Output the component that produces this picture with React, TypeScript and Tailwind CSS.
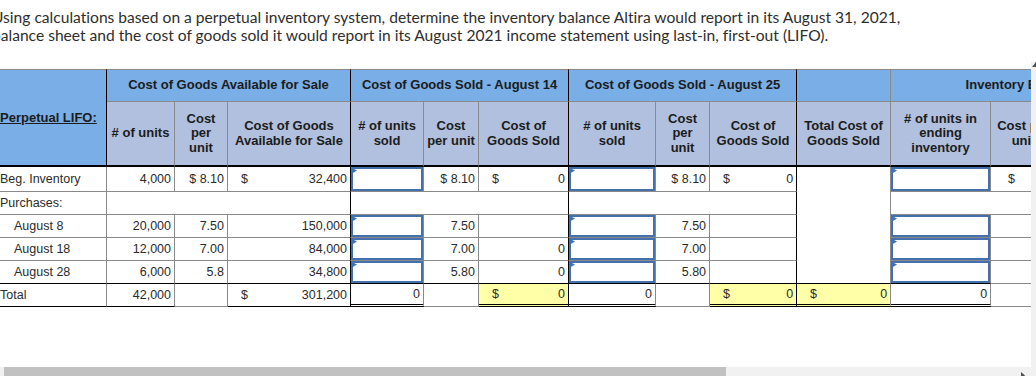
import React from "react";

// border presets (full class names so tailwind picks them up)
const gR = "border-r border-r-[#8a8a8a]";
const bR = "border-r border-r-black";
const gB = "border-b border-b-[#8a8a8a]";
const bB = "border-b border-b-black";
const dB = "border-b-[3px] border-b-black border-double";

const num = "justify-end pr-[3px]";
const dol = "justify-between pl-[13px] pr-[3px]";

function Flag() {
  return (
    <svg className="absolute -left-[1px] -top-[1px]" width="6" height="7" viewBox="0 0 6 7">
      <polygon points="0,0 5,2.5 0,5.5" fill="#3a72c2" />
    </svg>
  );
}

type TdProps = {
  c?: string;
  h?: string;
  inner?: string;
  colSpan?: number;
  rowSpan?: number;
  children?: React.ReactNode;
};

function Td({ c = "", h = "h-[22px]", inner = "", colSpan, rowSpan, children }: TdProps) {
  return (
    <td colSpan={colSpan} rowSpan={rowSpan} className={"p-0 align-middle " + c}>
      <div className={"flex items-center whitespace-nowrap " + h + " " + inner}>{children}</div>
    </td>
  );
}

function Input({ c = "", h = "h-[22px]" }: { c?: string; h?: string }) {
  return (
    <td className={"p-0 align-top " + c}>
      <div className={"relative border-2 border-[#4470ae] bg-white " + h}>
        <Flag />
      </div>
    </td>
  );
}

function Th({ c = "", h = "h-[63px]", colSpan, rowSpan, children }: TdProps) {
  return (
    <th colSpan={colSpan} rowSpan={rowSpan} className={"p-0 align-middle font-bold " + c}>
      <div className={"flex items-center justify-center text-center leading-[14.5px] " + h}>
        <span>{children}</span>
      </div>
    </th>
  );
}

const widths = [109, 68, 53, 123, 73, 55, 90, 87, 54, 87, 94, 100, 66, 96];

function PurchaseRow({ label, units, cost, total, sold14, sold25, last }: { label: string; units: string; cost: string; total: string; sold14: string; sold25: string; last?: boolean }) {
  const b = last ? bB : gB;
  return (
    <tr>
      <Td c={gR + " " + b} inner="pl-[16px]">{label}</Td>
      <Td c={gR + " " + b} inner={num}>{units}</Td>
      <Td c={gR + " " + b} inner={num}>{cost}</Td>
      <Td c={bR + " " + b} inner={num}>{total}</Td>
      <Input c={gR + " " + b} />
      <Td c={gR + " " + b} inner={num}>{cost.length === 3 ? cost + "0" : cost}</Td>
      <Td c={bR + " " + b} inner={num}>{sold14}</Td>
      <Input c={gR + " " + b} />
      <Td c={gR + " " + b} inner={num}>{cost.length === 3 ? cost + "0" : cost}</Td>
      <Td c={bR + " " + b} inner={num}>{sold25}</Td>
      <Input c={gR + " " + b} />
      <Td c={gR + " " + gB} />
      <Td c={gR + " " + gB} />
    </tr>
  );
}

export default function App() {
  return (
    <div className="w-[1036px] h-[376px] overflow-hidden bg-white">
      {/* question text */}
      <p className="ml-[-8px] w-[1100px] pt-[8px] text-[15.6px] leading-[18px] text-[#2e2e2e] font-['Lato',sans-serif] [font-variant-ligatures:none]">
        Using calculations based on a perpetual inventory system, determine the inventory balance Altira would report in its August 31, 2021,
        <br />
        balance sheet and the cost of goods sold it would report in its August 2021 income statement using last-in, first-out (LIFO).
      </p>

      <div className="mt-[18px] flex">
        <div className="w-[1031px]">
          {/* table area */}
          <div className="h-[303px] overflow-hidden pt-[7px]">
            <table className="ml-[-2px] w-[1155px] table-fixed border-separate border-spacing-0 text-[12.5px] text-[#2b2b2b] font-['Liberation_Sans',Arial,sans-serif]">
              <colgroup>
                {widths.map((w, i) => (
                  <col key={i} style={{ width: w }} />
                ))}
              </colgroup>
              <thead className="text-[13px] text-[#1c1c1c]">
                <tr className="bg-[#79aee6]">
                  <th rowSpan={2} className={"p-0 align-middle border-t border-t-[#8a8a8a] border-b-2 border-b-black " + bR}>
                    <div className="flex h-[95px] items-center pl-[2px] font-bold underline">Perpetual LIFO:</div>
                  </th>
                  <Th colSpan={3} h="h-[31px]" c={"border-t border-t-[#8a8a8a] " + gB + " " + bR}>Cost of Goods Available for Sale</Th>
                  <Th colSpan={3} h="h-[31px]" c={"border-t border-t-[#8a8a8a] " + gB + " " + bR}>Cost of Goods Sold - August 14</Th>
                  <Th colSpan={3} h="h-[31px]" c={"border-t border-t-[#8a8a8a] " + gB + " " + bR}>Cost of Goods Sold - August 25</Th>
                  <Th h="h-[31px]" c={"border-t border-t-[#8a8a8a] " + gB + " " + gR} />
                  <Th colSpan={3} h="h-[31px]" c={"border-t border-t-[#8a8a8a] " + gB + " " + gR}>Inventory Balance</Th>
                </tr>
                <tr className="bg-[#b0c0de]">
                  <Th c={gR + " border-b-2 border-b-black"}># of units</Th>
                  <Th c={gR + " border-b-2 border-b-black"}>Cost<br />per<br />unit</Th>
                  <Th c={bR + " border-b-2 border-b-black"}>Cost of Goods<br />Available for Sale</Th>
                  <Th c={gR + " border-b-2 border-b-black"}># of units<br />sold</Th>
                  <Th c={gR + " border-b-2 border-b-black"}>Cost<br />per unit</Th>
                  <Th c={bR + " border-b-2 border-b-black"}>Cost of<br />Goods Sold</Th>
                  <Th c={gR + " border-b-2 border-b-black"}># of units<br />sold</Th>
                  <Th c={gR + " border-b-2 border-b-black"}>Cost<br />per<br />unit</Th>
                  <Th c={bR + " border-b-2 border-b-black"}>Cost of<br />Goods Sold</Th>
                  <Th c={gR + " border-b-2 border-b-black"}>Total Cost of<br />Goods Sold</Th>
                  <Th c={gR + " border-b-2 border-b-black"}># of units in<br />ending<br />inventory</Th>
                  <Th c={gR + " border-b-2 border-b-black"}>Cost per<br />unit</Th>
                  <Th c={gR + " border-b-2 border-b-black"}>Ending<br />Inventory</Th>
                </tr>
              </thead>
              <tbody>
                <tr>
                  <Td c={gR + " " + gB} h="h-[24px]" inner="pl-[2px]">Beg. Inventory</Td>
                  <Td c={gR + " " + gB} h="h-[24px]" inner={num}>4,000</Td>
                  <Td c={gR + " " + gB} h="h-[24px]" inner={num}>$ 8.10</Td>
                  <Td c={bR + " " + gB} h="h-[24px]" inner={dol}><span>$</span><span>32,400</span></Td>
                  <Input c={gR + " " + gB} h="h-[24px]" />
                  <Td c={gR + " " + gB} h="h-[24px]" inner={num}>$ 8.10</Td>
                  <Td c={bR + " " + gB} h="h-[24px]" inner={dol}><span>$</span><span>0</span></Td>
                  <Input c={gR + " " + gB} h="h-[24px]" />
                  <Td c={gR + " " + gB} h="h-[24px]" inner={num}>$ 8.10</Td>
                  <Td c={bR + " " + gB} h="h-[24px]" inner={dol}><span>$</span><span>0</span></Td>
                  <Td c={gR + " " + bB} h="h-[116px]" rowSpan={5} />
                  <Input c={gR + " " + gB} h="h-[24px]" />
                  <Td c={gR + " " + gB} h="h-[24px]" inner="pl-[17px]">$</Td>
                  <Td c={gR + " " + gB} h="h-[24px]" />
                </tr>
                <tr>
                  <Td c={gR + " " + gB} inner="pl-[2px]">Purchases:</Td>
                  <Td colSpan={3} c={bR + " " + gB} />
                  <Td colSpan={3} c={bR + " " + gB} />
                  <Td colSpan={3} c={bR + " " + gB} />
                  <Td colSpan={3} c={gR + " " + gB} />
                </tr>
                <PurchaseRow label="August 8" units="20,000" cost="7.50" total="150,000" sold14="" sold25="" />
                <PurchaseRow label="August 18" units="12,000" cost="7.00" total="84,000" sold14="0" sold25="" />
                <PurchaseRow label="August 28" units="6,000" cost="5.8" total="34,800" sold14="0" sold25="" last />
                <tr>
                  <Td c={gR + " " + bB} inner="pl-[2px]">Total</Td>
                  <Td c={gR + " " + bB} inner={num}>42,000</Td>
                  <Td c={gR + " " + gB} />
                  <Td c={bR + " " + bB} inner={dol}><span>$</span><span>301,200</span></Td>
                  <Td c={gR + " " + dB} h="h-[20px]" inner={num}>0</Td>
                  <Td c={gR + " " + gB} />
                  <Td c={bR + " " + dB + " bg-[#ffffa8]"} h="h-[20px]" inner={dol}><span>$</span><span>0</span></Td>
                  <Td c={gR + " " + dB} h="h-[20px]" inner={num}>0</Td>
                  <Td c={gR + " " + gB} />
                  <Td c={bR + " " + dB + " bg-[#ffffa8]"} h="h-[20px]" inner={dol}><span>$</span><span>0</span></Td>
                  <Td c={gR + " " + dB + " bg-[#ffffa8]"} h="h-[20px]" inner={dol}><span>$</span><span>0</span></Td>
                  <Td c={gR + " " + dB} h="h-[20px]" inner={num}>0</Td>
                  <Td c={gR + " " + gB} />
                  <Td c={gR + " " + gB} />
                </tr>
              </tbody>
            </table>
          </div>

          {/* horizontal scrollbar */}
          <div className="relative h-[11px] bg-[#f1f1f1]">
            <div className="ml-[4px] mt-[2px] h-[9px] w-[722px] bg-[#c1c1c1]" />
            <svg className="absolute left-[1021px] top-[5px]" width="5" height="7" viewBox="0 0 5 7">
              <polygon points="0,0 4,3.5 0,7" fill="#505050" />
            </svg>
          </div>
        </div>

        {/* vertical scrollbar strip */}
        <div className="relative w-[5px] overflow-hidden bg-[#f1f1f1]">
          <svg className="absolute left-[1px] top-[0px]" width="8" height="6" viewBox="0 0 8 6">
            <polygon points="4,0 8,5 0,5" fill="#505050" />
          </svg>
        </div>
      </div>
    </div>
  );
}
